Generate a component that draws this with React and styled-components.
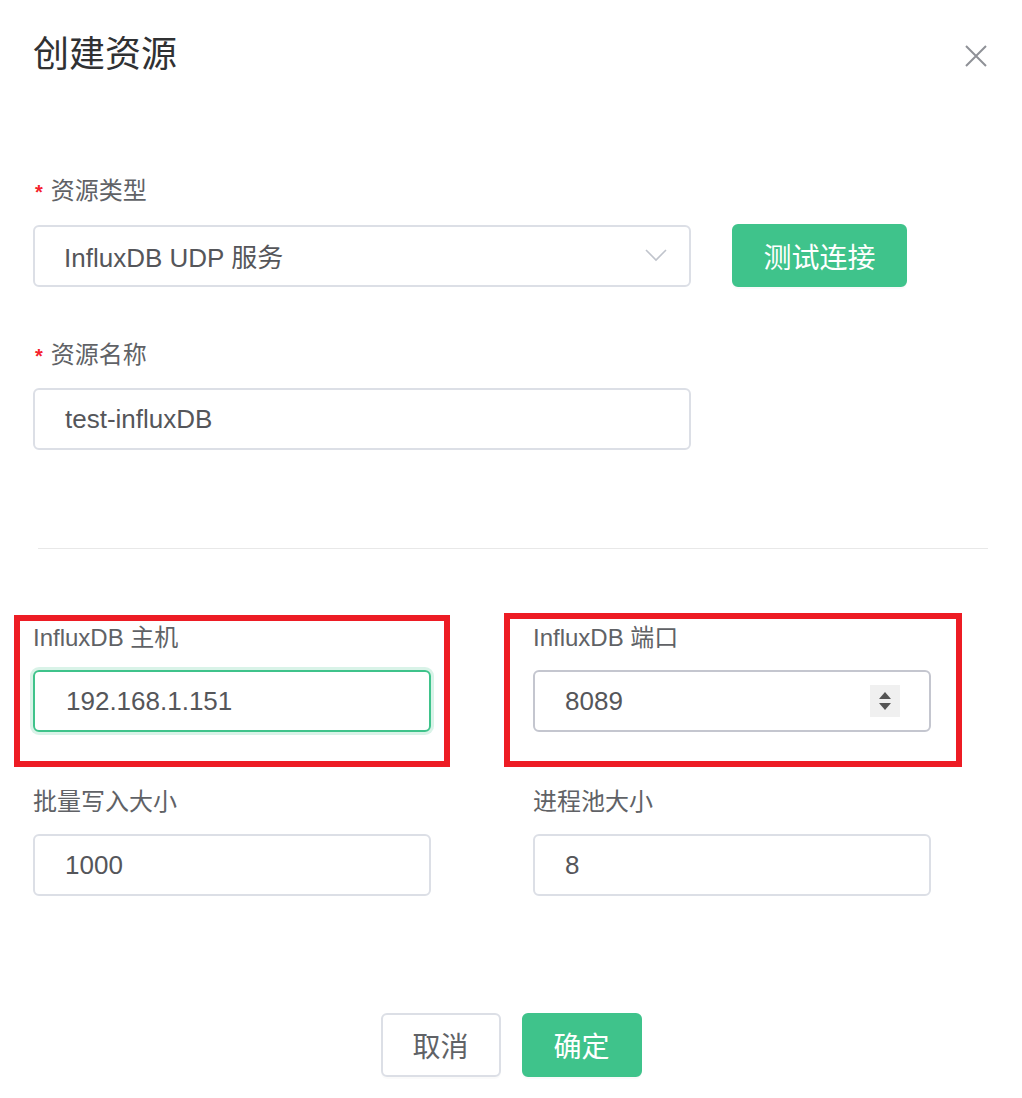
import React from 'react'
import styled, { createGlobalStyle } from 'styled-components';

const GlobalStyle = createGlobalStyle`
  body {
    margin: 0;
    background: #fff;
    font-family: "Liberation Sans", "Noto Sans CJK SC", sans-serif;
  }
`

const GREEN = '#3fc38b';

function Chevron() {
  return (
    <svg width="22" height="13" viewBox="0 0 22 13">
      <path d="M1 1 L11 11 L21 1" fill="none" stroke="#c0c4cc" strokeWidth="1.6" />
    </svg>
  )
}

function Close() {
  return (
    <svg width="24" height="24" viewBox="0 0 24 24">
      <path d="M2 2 L22 22 M22 2 L2 22" stroke="#8f9197" strokeWidth="2" />
    </svg>
  )
}

export default function App() {
  return (
    <>
      <GlobalStyle />
      <Dialog>
        <Header>
          <h2>创建资源</h2>
          <CloseBtn><Close /></CloseBtn>
        </Header>

        <Section>
          <Field>
            <Label required>资源类型</Label>
            <Row>
              <Select>
                <span>InfluxDB UDP 服务</span>
                <Chevron />
              </Select>
              <Button primary wide>测试连接</Button>
            </Row>
          </Field>
          <Field>
            <Label required>资源名称</Label>
            <Input wide>test-influxDB</Input>
          </Field>
        </Section>

        <Divider />

        <Grid>
          <Field>
            <Highlight left={-19} top={-5} width={436} height={152} />
            <Label>InfluxDB 主机</Label>
            <Input focused>192.168.1.151</Input>
          </Field>
          <Field>
            <Highlight left={-29} top={-7} width={458} height={154} />
            <Label>InfluxDB 端口</Label>
            <Input hovered>
              <span>8089</span>
              <Spinner>
                <svg width="14" height="20" viewBox="0 0 14 20">
                  <path d="M7 1 L13 8 L1 8 Z" fill="#555" />
                  <path d="M1 12 L13 12 L7 19 Z" fill="#555" />
                </svg>
              </Spinner>
            </Input>
          </Field>
          <Field>
            <Label>批量写入大小</Label>
            <Input>1000</Input>
          </Field>
          <Field>
            <Label>进程池大小</Label>
            <Input>8</Input>
          </Field>
        </Grid>

        <Footer>
          <Button>取消</Button>
          <Button primary>确定</Button>
        </Footer>
      </Dialog>
    </>
  )
}

const Dialog = styled.div`
  width: 1022px;
  height: 1098px;
  box-sizing: border-box;
  padding: 31px 34px 0 33px;
  background: #fff;
`

const Header = styled.div`
  display: flex;
  align-items: center;
  justify-content: space-between;

  h2 {
    margin: 0;
    font-size: 36px;
    line-height: 48px;
    font-weight: 400;
    color: #303133;
  }
`

const CloseBtn = styled.div`
  display: flex;
  margin-top: 2px;
`

const Section = styled.div`
  margin-top: 94px;
  display: flex;
  flex-direction: column;
  gap: 50px;
`

const Field = styled.div`
  position: relative;
  display: flex;
  flex-direction: column;
  gap: 14px;
`

const Label = styled.div`
  font-size: 24px;
  line-height: 36px;
  color: #606266;

  &::before {
    content: ${p => (p.required ? '"*"' : 'none')};
    color: #f5222d;
    font-weight: 700;
    margin: 0 8px 0 2px;
    font-size: 20px;
  }
`

const Row = styled.div`
  display: flex;
  align-items: center;
  gap: 41px;
`

const boxBase = `
  box-sizing: border-box;
  height: 62px;
  border-radius: 6px;
  display: flex;
  align-items: center;
  font-size: 26px;
  color: #55565a;
`

const Select = styled.div`
  ${boxBase}
  width: 658px;
  border: 2px solid #dcdfe6;
  padding: 0 22px 0 29px;
  justify-content: space-between;
`

const Input = styled.div`
  ${boxBase}
  width: ${p => (p.wide ? '658px' : '398px')};
  border: 2px solid ${p => (p.focused ? GREEN : p.hovered ? '#c4c6cf' : '#dcdfe6')};
  box-shadow: ${p => (p.focused ? '0 0 0 3px rgba(63, 195, 139, 0.2)' : 'none')};
  padding: 0 29px 0 ${p => (p.focused ? '31px' : '30px')};
  justify-content: space-between;
`

const Spinner = styled.div`
  width: 30px;
  height: 32px;
  background: #f0f0f0;
  display: flex;
  align-items: center;
  justify-content: center;
`

const Button = styled.button`
  box-sizing: border-box;
  height: ${p => (p.wide ? '63px' : '64px')};
  width: ${p => (p.wide ? '175px' : '120px')};
  border-radius: 6px;
  border: 2px solid ${p => (p.primary ? GREEN : '#dcdfe6')};
  background: ${p => (p.primary ? GREEN : '#fff')};
  color: ${p => (p.primary ? '#fff' : '#606266')};
  font-family: inherit;
  font-size: 28px;
  padding: 0;
  box-shadow: 0 2px 0 rgba(0, 0, 0, 0.02);
`

const Divider = styled.div`
  margin: 98px 0 0 5px;
  width: 950px;
  height: 1px;
  background: #e8e8e8;
`

const Grid = styled.div`
  margin-top: 71px;
  display: grid;
  grid-template-columns: 500px 398px;
  row-gap: 52px;
`

const Highlight = styled.div`
  position: absolute;
  left: ${p => p.left}px;
  top: ${p => p.top}px;
  width: ${p => p.width}px;
  height: ${p => p.height}px;
  box-sizing: border-box;
  border: 6px solid #ed1c24;
  pointer-events: none;
`

const Footer = styled.div`
  margin-top: 117px;
  display: flex;
  justify-content: center;
  gap: 21px;
  padding-left: 1px;
`
